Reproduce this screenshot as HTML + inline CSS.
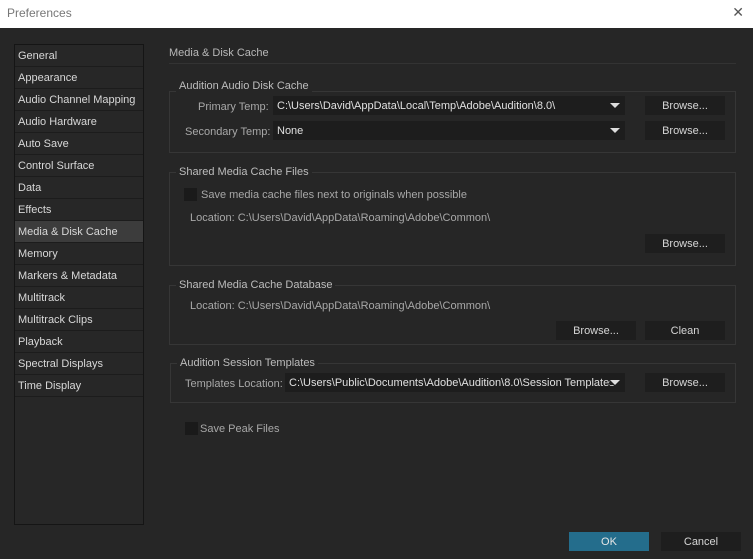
<!DOCTYPE html>
<html><head><meta charset="utf-8"><style>
*{margin:0;padding:0;box-sizing:border-box}
body{width:753px;height:559px;background:#262626;font-family:"Liberation Sans",sans-serif;font-size:11px;color:#c8c8c8;position:relative;overflow:hidden}
.abs{position:absolute}
.t{padding-top:1px}
.title{left:0;top:0;width:753px;height:28px;background:#fff;color:#777;font-size:12px;padding:6px 0 0 7px}
.x{right:9px;top:5px;color:#555;font-size:14px;font-family:"DejaVu Sans",sans-serif;font-weight:300}
.list{left:14px;top:44px;width:130px;height:481px;border:1px solid #151515;background:#272727}
.item{height:22px;line-height:23px;padding-left:3px;border-bottom:1px solid #1c1c1c;color:#d8d8d8}
.item.sel{background:#3c3c3c}
.grp{border:1px solid #363636}
.gt{background:#262626;padding:1px 3px 0;color:#bdbdbd}
.lbl{color:#a8a8a8;padding-top:1px}
.field{background:#1d1d1d;color:#e0e0e0;height:19px;line-height:20px;padding-left:4px}
.arr{position:absolute;right:5px;top:7px;width:0;height:0;border-left:5px solid transparent;border-right:5px solid transparent;border-top:5px solid #ddd}
.btn{background:#1e1e1e;color:#d6d6d6;height:19px;line-height:20px;text-align:center}
.cb{width:13px;height:13px;background:#1a1a1a}
</style></head><body>
<div class="abs title">Preferences</div>
<div class="abs x">✕</div>
<div class="abs list">
<div class="item">General</div><div class="item">Appearance</div><div class="item">Audio Channel Mapping</div><div class="item">Audio Hardware</div><div class="item">Auto Save</div><div class="item">Control Surface</div><div class="item">Data</div><div class="item">Effects</div><div class="item sel">Media &amp; Disk Cache</div><div class="item">Memory</div><div class="item">Markers &amp; Metadata</div><div class="item">Multitrack</div><div class="item">Multitrack Clips</div><div class="item">Playback</div><div class="item">Spectral Displays</div><div class="item">Time Display</div>
</div>
<div class="abs t" style="left:169px;top:46px;color:#b8b8b8">Media &amp; Disk Cache</div>
<div class="abs" style="left:169px;top:63px;width:567px;height:1px;background:#333"></div>

<div class="abs grp" style="left:169px;top:91px;width:567px;height:62px"></div>
<div class="abs gt" style="left:176px;top:79px">Audition Audio Disk Cache</div>
<div class="abs lbl" style="left:198px;top:100px">Primary Temp:</div>
<div class="abs field" style="left:273px;top:96px;width:352px">C:\Users\David\AppData\Local\Temp\Adobe\Audition\8.0\<div class="arr"></div></div>
<div class="abs btn" style="left:645px;top:96px;width:80px">Browse...</div>
<div class="abs lbl" style="left:185px;top:125px">Secondary Temp:</div>
<div class="abs field" style="left:273px;top:121px;width:352px">None<div class="arr"></div></div>
<div class="abs btn" style="left:645px;top:121px;width:80px">Browse...</div>

<div class="abs grp" style="left:169px;top:172px;width:567px;height:94px"></div>
<div class="abs gt" style="left:176px;top:165px">Shared Media Cache Files</div>
<div class="abs cb" style="left:184px;top:188px"></div>
<div class="abs lbl" style="left:201px;top:188px">Save media cache files next to originals when possible</div>
<div class="abs lbl" style="left:190px;top:211px">Location: C:\Users\David\AppData\Roaming\Adobe\Common\</div>
<div class="abs btn" style="left:645px;top:234px;width:80px">Browse...</div>

<div class="abs grp" style="left:169px;top:285px;width:567px;height:60px"></div>
<div class="abs gt" style="left:176px;top:278px">Shared Media Cache Database</div>
<div class="abs lbl" style="left:190px;top:299px">Location: C:\Users\David\AppData\Roaming\Adobe\Common\</div>
<div class="abs btn" style="left:556px;top:321px;width:80px">Browse...</div>
<div class="abs btn" style="left:645px;top:321px;width:80px">Clean</div>

<div class="abs grp" style="left:170px;top:363px;width:566px;height:40px"></div>
<div class="abs gt" style="left:177px;top:356px">Audition Session Templates</div>
<div class="abs lbl" style="left:185px;top:377px">Templates Location:</div>
<div class="abs field" style="left:285px;top:373px;width:340px;overflow:hidden;white-space:nowrap;padding-right:16px">C:\Users\Public\Documents\Adobe\Audition\8.0\Session Templates<div class="arr" style="background:#1d1d1d"></div></div>
<div class="abs btn" style="left:645px;top:373px;width:80px">Browse...</div>

<div class="abs cb" style="left:185px;top:422px"></div>
<div class="abs lbl" style="left:200px;top:422px">Save Peak Files</div>

<div class="abs" style="left:569px;top:532px;width:80px;height:19px;background:#246d8c;color:#e6e6e6;text-align:center;line-height:20px">OK</div>
<div class="abs btn" style="left:661px;top:532px;width:80px">Cancel</div>
</body></html>
